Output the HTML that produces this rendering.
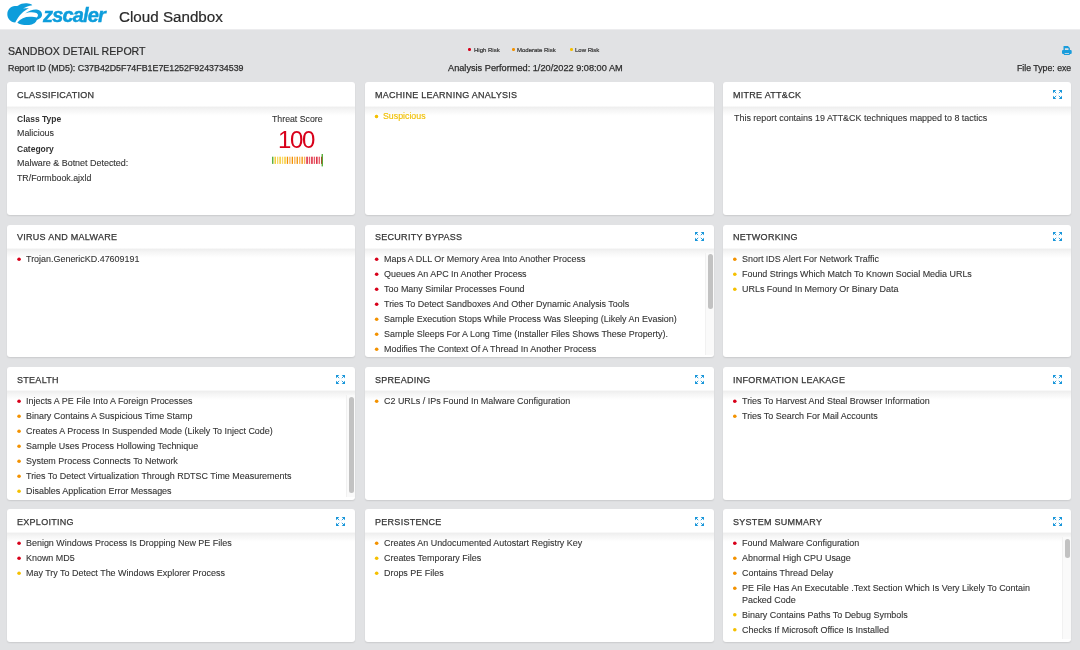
<!DOCTYPE html>
<html><head><meta charset="utf-8">
<style>
*{margin:0;padding:0;box-sizing:border-box}
html,body{width:1080px;height:650px;overflow:hidden;background:#e1e2e4;font-family:"Liberation Sans",sans-serif;color:#333}
.hdr{position:absolute;left:0;top:0;width:1080px;height:29px;background:#fff}
.abs{position:absolute;white-space:nowrap;will-change:transform}
.card{position:absolute;width:348px;height:132.8px;background:#fff;border-radius:3px;box-shadow:0 1px 1.5px rgba(0,0,0,0.10);overflow:hidden}
.ttl{position:absolute;left:10.1px;top:1.7px;height:23px;line-height:23px;font-size:9px;letter-spacing:0.28px;color:#363636;-webkit-text-stroke:0.25px #363636;white-space:nowrap;will-change:transform}
.sh{position:absolute;left:0;top:23.35px;width:100%;height:10px;background:linear-gradient(#fcfcfc 0,#efefef 1.5px,#f5f5f5 4px,#fcfcfc 8px,#fff 10px)}
.li{position:absolute;left:18.6px;font-size:8.95px;line-height:15px;height:15px;color:#333;white-space:nowrap;-webkit-text-stroke:0.1px #333;will-change:transform}
.r{--c:#d8001a}.o{--c:#f39200}.y{--c:#f5c000}
.exp{position:absolute;left:329.70000000000005px;top:7.799999999999997px;width:9px;height:9px}
.sb{position:absolute;right:0;width:9px;background:#fafafa;border-left:1px solid #f1f1f1}
.sb i{position:absolute;left:2px;width:5px;border-radius:2.5px;background:#c2c2c2}
</style></head><body>
<div class="hdr"></div><div class="abs" style="left:0;top:29px;width:1080px;height:1px;background:#ececee"></div>
<svg class="abs" style="left:4px;top:1px" width="42" height="27" viewBox="0 0 1011 650">
  <path fill="#0d9ddb" d="M270 520 C150 510 80 420 80 320 C80 210 160 125 260 122 C300 122 320 125 345 108 C400 70 480 48 580 60 C640 68 680 90 680 100 C600 110 520 140 460 180 C520 170 580 170 600 175 C480 230 360 340 270 520 Z"/>
  <path fill="#0d9ddb" d="M510 300 C600 230 700 200 780 205 C880 215 920 280 915 340 C910 400 860 440 790 455 C760 540 660 580 560 578 C460 575 360 560 320 515 C400 420 500 380 620 378 C700 378 760 395 790 395 C830 370 830 310 780 290 C700 260 580 270 510 300 Z"/>
</svg>
<div class="abs" style="left:43px;top:2px;font-size:20px;line-height:26px;font-weight:bold;font-style:italic;color:#0d9ddb;letter-spacing:-0.85px;-webkit-text-stroke:0.45px #0d9ddb">zscaler</div>
<div class="abs" style="left:119px;top:5.8px;font-size:15.2px;line-height:22px;color:#2b2b2b;-webkit-text-stroke:0.2px #2b2b2b">Cloud Sandbox</div>
<div class="abs" style="left:7.5px;top:44px;font-size:10.6px;line-height:14px;color:#2d2d2d;-webkit-text-stroke:0.2px #2d2d2d">SANDBOX DETAIL REPORT</div>
<div class="abs" style="left:7.5px;top:62px;font-size:8.85px;line-height:12px;color:#2d2d2d;-webkit-text-stroke:0.25px #2d2d2d">Report ID (MD5): C37B42D5F74FB1E7E1252F9243734539</div>
<div class="abs" style="left:467.1px;top:47.3px;width:5px;height:5px;background:radial-gradient(circle at 50% 50%,#d8001a 0,#d8001a 1.1px,transparent 2px)"></div><div class="abs" style="left:510.5px;top:47.3px;width:5px;height:5px;background:radial-gradient(circle at 50% 50%,#f39200 0,#f39200 1.1px,transparent 2px)"></div><div class="abs" style="left:568.5px;top:47.3px;width:5px;height:5px;background:radial-gradient(circle at 50% 50%,#f5c000 0,#f5c000 1.1px,transparent 2px)"></div>
<div class="abs" style="left:473.9px;top:46px;font-size:6px;line-height:8px;color:#333;-webkit-text-stroke:0.2px #333">High Risk</div>
<div class="abs" style="left:517.4px;top:46px;font-size:6px;line-height:8px;color:#333;-webkit-text-stroke:0.2px #333">Moderate Risk</div>
<div class="abs" style="left:575px;top:46px;font-size:6px;line-height:8px;color:#333;-webkit-text-stroke:0.2px #333">Low Risk</div>
<div class="abs" style="left:448.3px;top:62px;font-size:9.2px;line-height:12px;color:#2d2d2d;-webkit-text-stroke:0.25px #2d2d2d">Analysis Performed: 1/20/2022 9:08:00 AM</div>
<svg class="abs" style="left:1062.4px;top:46px" width="10" height="9" viewBox="0 0 10 9">
  <path fill="#1a9ddc" fill-rule="evenodd" d="M1.5 0.3 Q1.5 0 1.9 0 H5.9 L7.9 2 V4.5 H1.5 Z M2.9 2.2 V4.5 H6.5 V2.2 Z"/>
  <rect x="0" y="3.9" width="9.7" height="4.1" rx="1.1" fill="#1a9ddc"/>
  <rect x="1.8" y="6.5" width="6" height="2.5" rx="0.5" fill="#1a9ddc"/>
  <rect x="2.7" y="7.2" width="4.3" height="0.8" fill="#e1e2e4"/>
</svg>
<div class="abs" style="right:9px;top:62px;font-size:8.74px;line-height:12px;color:#2d2d2d;-webkit-text-stroke:0.25px #2d2d2d">File Type: exe</div>
<div class="card" style="left:6.7px;top:82.4px;width:348.3px">
<div class="ttl">CLASSIFICATION</div><div class="sh"></div>
</div>
<div class="card" style="left:364.85px;top:82.4px;width:349px">
<div class="ttl">MACHINE LEARNING ANALYSIS</div><div class="sh"></div>
</div>
<div class="card" style="left:723.1px;top:82.4px;width:348.3px">
<div class="ttl">MITRE ATT&amp;CK</div><div class="sh"></div>
<svg class="exp" width="9" height="9" viewBox="0 0 9 9"><path fill="#1896da" d="M0 0H3.3L0 3.3Z M9 0V3.3L5.7 0Z M0 9V5.7L3.3 9Z M9 9H5.7L9 5.7Z"/><path stroke="#1896da" stroke-width="0.9" d="M1 1L3.2 3.2M8 1L5.8 3.2M1 8L3.2 5.8M8 8L5.8 5.8"/></svg>
</div>
<div class="card" style="left:6.7px;top:224.65px;width:348.3px">
<div class="ttl">VIRUS AND MALWARE</div><div class="sh"></div>
<div class="lst">
<div class="li" style="left:19.30px;top:27px">Trojan.GenericKD.47609191</div>
</div>
<svg style="position:absolute;left:0;top:0" width="30" height="133"><circle cx="12.06" cy="34.20" r="1.8" fill="#d8001a"/></svg>
</div>
<div class="card" style="left:364.85px;top:224.65px;width:349px">
<div class="ttl">SECURITY BYPASS</div><div class="sh"></div>
<svg class="exp" width="9" height="9" viewBox="0 0 9 9"><path fill="#1896da" d="M0 0H3.3L0 3.3Z M9 0V3.3L5.7 0Z M0 9V5.7L3.3 9Z M9 9H5.7L9 5.7Z"/><path stroke="#1896da" stroke-width="0.9" d="M1 1L3.2 3.2M8 1L5.8 3.2M1 8L3.2 5.8M8 8L5.8 5.8"/></svg>
<div class="lst">
<div class="li" style="left:18.75px;top:27px">Maps A DLL Or Memory Area Into Another Process</div>
<div class="li" style="left:18.75px;top:42px">Queues An APC In Another Process</div>
<div class="li" style="left:18.75px;top:57px">Too Many Similar Processes Found</div>
<div class="li" style="left:18.75px;top:72px">Tries To Detect Sandboxes And Other Dynamic Analysis Tools</div>
<div class="li" style="left:18.75px;top:87px">Sample Execution Stops While Process Was Sleeping (Likely An Evasion)</div>
<div class="li" style="left:18.75px;top:102px">Sample Sleeps For A Long Time (Installer Files Shows These Property).</div>
<div class="li" style="left:18.75px;top:117px">Modifies The Context Of A Thread In Another Process</div>
</div>
<svg style="position:absolute;left:0;top:0" width="30" height="133"><circle cx="11.65" cy="34.20" r="1.8" fill="#d8001a"/><circle cx="11.65" cy="49.20" r="1.8" fill="#d8001a"/><circle cx="11.65" cy="64.20" r="1.8" fill="#d8001a"/><circle cx="11.65" cy="79.20" r="1.8" fill="#d8001a"/><circle cx="11.65" cy="94.20" r="1.8" fill="#f39200"/><circle cx="11.65" cy="109.20" r="1.8" fill="#f39200"/><circle cx="11.65" cy="124.20" r="1.8" fill="#f39200"/></svg>
<div class="sb" style="top:28px;height:102px"><i style="top:1.8499999999999943px;height:54.10000000000002px"></i></div>
</div>
<div class="card" style="left:723.1px;top:224.65px;width:348.3px">
<div class="ttl">NETWORKING</div><div class="sh"></div>
<svg class="exp" width="9" height="9" viewBox="0 0 9 9"><path fill="#1896da" d="M0 0H3.3L0 3.3Z M9 0V3.3L5.7 0Z M0 9V5.7L3.3 9Z M9 9H5.7L9 5.7Z"/><path stroke="#1896da" stroke-width="0.9" d="M1 1L3.2 3.2M8 1L5.8 3.2M1 8L3.2 5.8M8 8L5.8 5.8"/></svg>
<div class="lst">
<div class="li" style="left:18.50px;top:27px">Snort IDS Alert For Network Traffic</div>
<div class="li" style="left:18.50px;top:42px">Found Strings Which Match To Known Social Media URLs</div>
<div class="li" style="left:18.50px;top:57px">URLs Found In Memory Or Binary Data</div>
</div>
<svg style="position:absolute;left:0;top:0" width="30" height="133"><circle cx="11.80" cy="34.20" r="1.8" fill="#f39200"/><circle cx="11.80" cy="49.20" r="1.8" fill="#f5c000"/><circle cx="11.80" cy="64.20" r="1.8" fill="#f5c000"/></svg>
</div>
<div class="card" style="left:6.7px;top:366.9px;width:348.3px">
<div class="ttl">STEALTH</div><div class="sh"></div>
<svg class="exp" width="9" height="9" viewBox="0 0 9 9"><path fill="#1896da" d="M0 0H3.3L0 3.3Z M9 0V3.3L5.7 0Z M0 9V5.7L3.3 9Z M9 9H5.7L9 5.7Z"/><path stroke="#1896da" stroke-width="0.9" d="M1 1L3.2 3.2M8 1L5.8 3.2M1 8L3.2 5.8M8 8L5.8 5.8"/></svg>
<div class="lst">
<div class="li" style="left:19.30px;top:27px">Injects A PE File Into A Foreign Processes</div>
<div class="li" style="left:19.30px;top:42px">Binary Contains A Suspicious Time Stamp</div>
<div class="li" style="left:19.30px;top:57px">Creates A Process In Suspended Mode (Likely To Inject Code)</div>
<div class="li" style="left:19.30px;top:72px">Sample Uses Process Hollowing Technique</div>
<div class="li" style="left:19.30px;top:87px">System Process Connects To Network</div>
<div class="li" style="left:19.30px;top:102px">Tries To Detect Virtualization Through RDTSC Time Measurements</div>
<div class="li" style="left:19.30px;top:117px">Disables Application Error Messages</div>
</div>
<svg style="position:absolute;left:0;top:0" width="30" height="133"><circle cx="12.06" cy="34.20" r="1.8" fill="#d8001a"/><circle cx="12.06" cy="49.20" r="1.8" fill="#f39200"/><circle cx="12.06" cy="64.20" r="1.8" fill="#f39200"/><circle cx="12.06" cy="79.20" r="1.8" fill="#f39200"/><circle cx="12.06" cy="94.20" r="1.8" fill="#f39200"/><circle cx="12.06" cy="109.20" r="1.8" fill="#f39200"/><circle cx="12.06" cy="124.20" r="1.8" fill="#f5c000"/></svg>
<div class="sb" style="top:28px;height:102px"><i style="top:2.1000000000000227px;height:96px"></i></div>
</div>
<div class="card" style="left:364.85px;top:366.9px;width:349px">
<div class="ttl">SPREADING</div><div class="sh"></div>
<svg class="exp" width="9" height="9" viewBox="0 0 9 9"><path fill="#1896da" d="M0 0H3.3L0 3.3Z M9 0V3.3L5.7 0Z M0 9V5.7L3.3 9Z M9 9H5.7L9 5.7Z"/><path stroke="#1896da" stroke-width="0.9" d="M1 1L3.2 3.2M8 1L5.8 3.2M1 8L3.2 5.8M8 8L5.8 5.8"/></svg>
<div class="lst">
<div class="li" style="left:18.75px;top:27px">C2 URLs / IPs Found In Malware Configuration</div>
</div>
<svg style="position:absolute;left:0;top:0" width="30" height="133"><circle cx="11.65" cy="34.20" r="1.8" fill="#f39200"/></svg>
</div>
<div class="card" style="left:723.1px;top:366.9px;width:348.3px">
<div class="ttl">INFORMATION LEAKAGE</div><div class="sh"></div>
<svg class="exp" width="9" height="9" viewBox="0 0 9 9"><path fill="#1896da" d="M0 0H3.3L0 3.3Z M9 0V3.3L5.7 0Z M0 9V5.7L3.3 9Z M9 9H5.7L9 5.7Z"/><path stroke="#1896da" stroke-width="0.9" d="M1 1L3.2 3.2M8 1L5.8 3.2M1 8L3.2 5.8M8 8L5.8 5.8"/></svg>
<div class="lst">
<div class="li" style="left:18.50px;top:27px">Tries To Harvest And Steal Browser Information</div>
<div class="li" style="left:18.50px;top:42px">Tries To Search For Mail Accounts</div>
</div>
<svg style="position:absolute;left:0;top:0" width="30" height="133"><circle cx="11.80" cy="34.20" r="1.8" fill="#d8001a"/><circle cx="11.80" cy="49.20" r="1.8" fill="#f39200"/></svg>
</div>
<div class="card" style="left:6.7px;top:509.15px;width:348.3px">
<div class="ttl">EXPLOITING</div><div class="sh"></div>
<svg class="exp" width="9" height="9" viewBox="0 0 9 9"><path fill="#1896da" d="M0 0H3.3L0 3.3Z M9 0V3.3L5.7 0Z M0 9V5.7L3.3 9Z M9 9H5.7L9 5.7Z"/><path stroke="#1896da" stroke-width="0.9" d="M1 1L3.2 3.2M8 1L5.8 3.2M1 8L3.2 5.8M8 8L5.8 5.8"/></svg>
<div class="lst">
<div class="li" style="left:19.30px;top:27px">Benign Windows Process Is Dropping New PE Files</div>
<div class="li" style="left:19.30px;top:42px">Known MD5</div>
<div class="li" style="left:19.30px;top:57px">May Try To Detect The Windows Explorer Process</div>
</div>
<svg style="position:absolute;left:0;top:0" width="30" height="133"><circle cx="12.06" cy="34.20" r="1.8" fill="#d8001a"/><circle cx="12.06" cy="49.20" r="1.8" fill="#d8001a"/><circle cx="12.06" cy="64.20" r="1.8" fill="#f5c000"/></svg>
</div>
<div class="card" style="left:364.85px;top:509.15px;width:349px">
<div class="ttl">PERSISTENCE</div><div class="sh"></div>
<svg class="exp" width="9" height="9" viewBox="0 0 9 9"><path fill="#1896da" d="M0 0H3.3L0 3.3Z M9 0V3.3L5.7 0Z M0 9V5.7L3.3 9Z M9 9H5.7L9 5.7Z"/><path stroke="#1896da" stroke-width="0.9" d="M1 1L3.2 3.2M8 1L5.8 3.2M1 8L3.2 5.8M8 8L5.8 5.8"/></svg>
<div class="lst">
<div class="li" style="left:18.75px;top:27px">Creates An Undocumented Autostart Registry Key</div>
<div class="li" style="left:18.75px;top:42px">Creates Temporary Files</div>
<div class="li" style="left:18.75px;top:57px">Drops PE Files</div>
</div>
<svg style="position:absolute;left:0;top:0" width="30" height="133"><circle cx="11.65" cy="34.20" r="1.8" fill="#f39200"/><circle cx="11.65" cy="49.20" r="1.8" fill="#f5c000"/><circle cx="11.65" cy="64.20" r="1.8" fill="#f5c000"/></svg>
</div>
<div class="card" style="left:723.1px;top:509.15px;width:348.3px">
<div class="ttl">SYSTEM SUMMARY</div><div class="sh"></div>
<svg class="exp" width="9" height="9" viewBox="0 0 9 9"><path fill="#1896da" d="M0 0H3.3L0 3.3Z M9 0V3.3L5.7 0Z M0 9V5.7L3.3 9Z M9 9H5.7L9 5.7Z"/><path stroke="#1896da" stroke-width="0.9" d="M1 1L3.2 3.2M8 1L5.8 3.2M1 8L3.2 5.8M8 8L5.8 5.8"/></svg>
<div class="lst">
<div class="li" style="left:18.50px;top:27px">Found Malware Configuration</div>
<div class="li" style="left:18.50px;top:42px">Abnormal High CPU Usage</div>
<div class="li" style="left:18.50px;top:57px">Contains Thread Delay</div>
<div class="li" style="left:18.50px;top:72px">PE File Has An Executable .Text Section Which Is Very Likely To Contain</div>
<div class="li" style="left:18.50px;top:83.5px">Packed Code</div>
<div class="li" style="left:18.50px;top:98.5px">Binary Contains Paths To Debug Symbols</div>
<div class="li" style="left:18.50px;top:113.5px">Checks If Microsoft Office Is Installed</div>
</div>
<svg style="position:absolute;left:0;top:0" width="30" height="133"><circle cx="11.80" cy="34.20" r="1.8" fill="#d8001a"/><circle cx="11.80" cy="49.20" r="1.8" fill="#f39200"/><circle cx="11.80" cy="64.20" r="1.8" fill="#f39200"/><circle cx="11.80" cy="79.20" r="1.8" fill="#f39200"/><circle cx="11.80" cy="105.70" r="1.8" fill="#f5c000"/><circle cx="11.80" cy="120.70" r="1.8" fill="#f5c000"/></svg>
<div class="sb" style="top:28px;height:102px"><i style="top:1.8500000000000227px;height:19px"></i></div>
</div>
<div class="abs" style="left:17px;top:110.75px;font-size:8.5px;line-height:17.0px;font-weight:bold;color:#333">Class Type</div>
<div class="abs" style="left:17px;top:124.52px;font-size:8.9px;line-height:17.8px;color:#333;-webkit-text-stroke:0.1px #333">Malicious</div>
<div class="abs" style="left:17px;top:141.05px;font-size:8.5px;line-height:17.0px;font-weight:bold;color:#333">Category</div>
<div class="abs" style="left:17px;top:154.65px;font-size:8.95px;line-height:17.9px;color:#333;-webkit-text-stroke:0.1px #333">Malware &amp; Botnet Detected:</div>
<div class="abs" style="left:17px;top:169.65px;font-size:8.8px;line-height:17.6px;color:#333;-webkit-text-stroke:0.1px #333">TR/Formbook.ajxld</div>
<div class="abs" style="left:271.6px;top:110.52px;font-size:8.75px;line-height:17.5px;color:#333;-webkit-text-stroke:0.1px #333">Threat Score</div>
<div class="abs" style="left:278px;top:116.18px;font-size:24px;line-height:48px;color:#d8001a;letter-spacing:-1.3px">100</div>
<svg class="abs" style="left:271.8px;top:154px" width="52" height="13"><rect x="0.10" y="2.7" width="1.3" height="7.2" fill="#4aa82a"/><rect x="2.55" y="2.7" width="1.3" height="7.2" fill="#f5c518"/><rect x="5.00" y="2.7" width="1.3" height="7.2" fill="#f7d868"/><rect x="7.45" y="2.7" width="1.3" height="7.2" fill="#f5c518"/><rect x="9.90" y="2.7" width="1.3" height="7.2" fill="#f7d868"/><rect x="12.35" y="2.7" width="1.3" height="7.2" fill="#f5c518"/><rect x="14.80" y="2.7" width="1.3" height="7.2" fill="#f39200"/><rect x="17.25" y="2.7" width="1.3" height="7.2" fill="#f6b35a"/><rect x="19.70" y="2.7" width="1.3" height="7.2" fill="#f39200"/><rect x="22.15" y="2.7" width="1.3" height="7.2" fill="#f6b35a"/><rect x="24.60" y="2.7" width="1.3" height="7.2" fill="#f39200"/><rect x="27.05" y="2.7" width="1.3" height="7.2" fill="#f6b35a"/><rect x="29.50" y="2.7" width="1.3" height="7.2" fill="#f39200"/><rect x="31.95" y="2.7" width="1.3" height="7.2" fill="#f6b35a"/><rect x="34.40" y="2.7" width="1.3" height="7.2" fill="#d8001a"/><rect x="36.85" y="2.7" width="1.3" height="7.2" fill="#e65a66"/><rect x="39.30" y="2.7" width="1.3" height="7.2" fill="#d8001a"/><rect x="41.75" y="2.7" width="1.3" height="7.2" fill="#e65a66"/><rect x="44.20" y="2.7" width="1.3" height="7.2" fill="#d8001a"/><rect x="46.65" y="2.7" width="1.3" height="7.2" fill="#e65a66"/><rect x="49.10" y="2.7" width="1.3" height="7.2" fill="#d8001a"/><rect x="49.6" y="0" width="1.3" height="12.4" fill="#4aa82a"/></svg>
<div class="abs" style="left:373.7px;top:113.5px;width:5px;height:5px;background:radial-gradient(circle at 50% 50%,#f5c000 0,#f5c000 1.3px,transparent 2.2px)"></div>
<div class="abs" style="left:382.9px;top:107.65px;font-size:8.8px;line-height:17.6px;color:#f0bf00;-webkit-text-stroke:0.15px #f0bf00">Suspicious</div>
<div class="abs" style="left:734.2px;top:109.65px;font-size:8.95px;line-height:17.9px;color:#333;-webkit-text-stroke:0.1px #333">This report contains 19 ATT&amp;CK techniques mapped to 8 tactics</div>
</body></html>
